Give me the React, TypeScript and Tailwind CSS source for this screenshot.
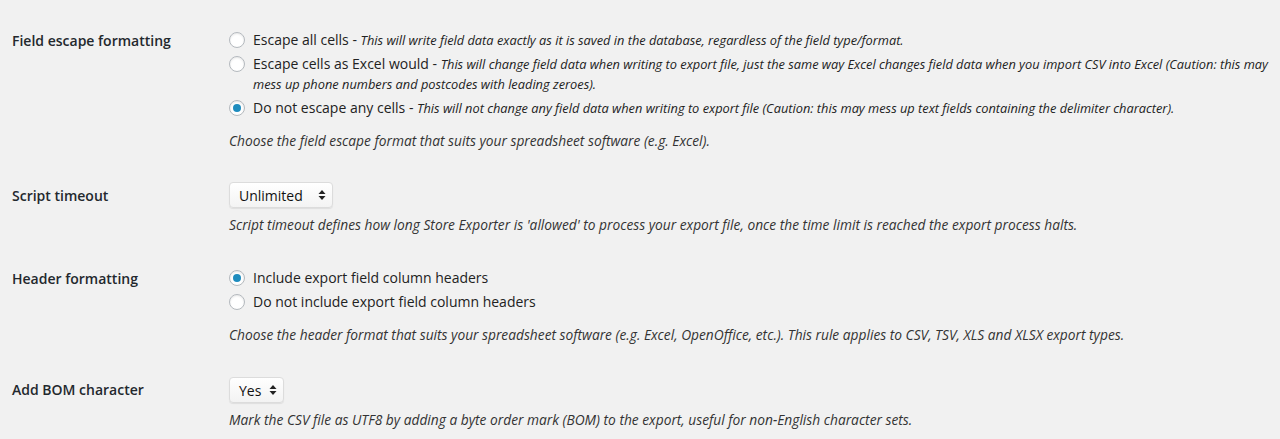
import type { ReactNode } from "react";

function Radio({ checked }: { checked?: boolean }) {
  return (
    <span className="mr-2 mt-[2px] inline-flex h-4 w-4 shrink-0 items-center justify-center rounded-full border border-[#b4b9be] bg-white shadow-[inset_0_1px_2px_rgba(0,0,0,0.1)] align-top">
      {checked && <span className="h-2 w-2 rounded-full bg-[#1e8cbe]" />}
    </span>
  );
}

function Option({ checked, label, note }: { checked?: boolean; label: string; note?: string }) {
  return (
    <label className="mb-1 flex items-start leading-5">
      <Radio checked={checked} />
      <span className="text-[14px] text-[#222]">
        {label}
        {note && (
          <>
            {" - "}
            <span className="text-[12.8px] italic">{note}</span>
          </>
        )}
      </span>
    </label>
  );
}

function Select({ value, width }: { value: string; width: string }) {
  return (
    <div
      className={`flex h-[26px] ${width} items-center justify-between rounded-[4px] border border-[#dcdcdc] bg-gradient-to-b from-white to-[#f3f3f3] pl-[9px] pr-[6px] text-[14px] text-[#111] shadow-[0_1px_1px_rgba(0,0,0,0.08)]`}
    >
      <span>{value}</span>
      <svg width="8" height="12" viewBox="0 0 8 12">
        <path d="M4 1 L7.5 5 H0.5 Z" fill="#222" />
        <path d="M4 11 L7.5 7 H0.5 Z" fill="#222" />
      </svg>
    </div>
  );
}

function Row({ label, labelPad, mt, children }: { label: string; labelPad: string; mt: string; children: ReactNode }) {
  return (
    <div className={`flex ${mt}`}>
      <div className={`w-[217px] shrink-0 ${labelPad} text-[14px] font-semibold leading-5 text-[#23282d]`}>
        {label}
      </div>
      <div className="flex-1 pr-[6px]">{children}</div>
    </div>
  );
}

function Description({ children, mt }: { children: ReactNode; mt: string }) {
  return <p className={`${mt} text-[13.75px] italic leading-5 text-[#333]`}>{children}</p>;
}

export default function App() {
  return (
    <div
      className="min-h-[439px] bg-[#f1f1f1] pl-3 pt-[30px]"
      style={{ fontFamily: '"Open Sans", "Noto Sans", sans-serif' }}
    >
      <Row label="Field escape formatting" labelPad="pt-[1px]" mt="mt-0">
        <Option
          label="Escape all cells"
          note="This will write field data exactly as it is saved in the database, regardless of the field type/format."
        />
        <Option
          label="Escape cells as Excel would"
          note="This will change field data when writing to export file, just the same way Excel changes field data when you import CSV into Excel (Caution: this may mess up phone numbers and postcodes with leading zeroes)."
        />
        <Option
          checked
          label="Do not escape any cells"
          note="This will not change any field data when writing to export file (Caution: this may mess up text fields containing the delimiter character)."
        />
        <Description mt="mt-[13px]">
          Choose the field escape format that suits your spreadsheet software (e.g. Excel).
        </Description>
      </Row>

      <Row label="Script timeout" labelPad="pt-[4px]" mt="mt-[31px]">
        <Select value="Unlimited" width="w-[104px]" />
        <Description mt="mt-[7px]">
          Script timeout defines how long Store Exporter is 'allowed' to process your export file, once the time limit is reached the export process halts.
        </Description>
      </Row>

      <Row label="Header formatting" labelPad="pt-[1px]" mt="mt-[33px]">
        <Option checked label="Include export field column headers" />
        <Option label="Do not include export field column headers" />
        <Description mt="mt-[13px]">
          Choose the header format that suits your spreadsheet software (e.g. Excel, OpenOffice, etc.). This rule applies to CSV, TSV, XLS and XLSX export types.
        </Description>
      </Row>

      <Row label="Add BOM character" labelPad="pt-[3px]" mt="mt-[32px]">
        <Select value="Yes" width="w-[55px]" />
        <Description mt="mt-[7px]">
          Mark the CSV file as UTF8 by adding a byte order mark (BOM) to the export, useful for non-English character sets.
        </Description>
      </Row>
    </div>
  );
}
